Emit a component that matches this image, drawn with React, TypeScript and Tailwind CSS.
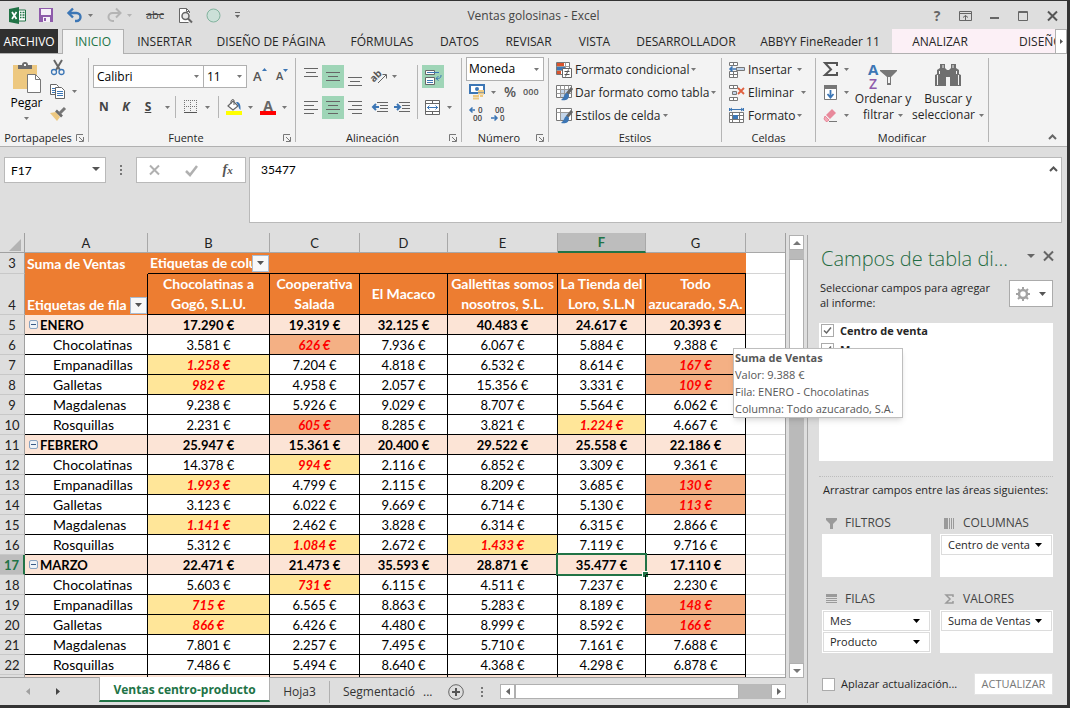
import { useState } from 'react';
import type { ReactNode } from 'react';

type Tone = 'y' | 'o' | '';

interface Row {
  n: number;
  label: string;
  month?: boolean;
  values: string[];
  // one letter per value: y = yellow, o = orange, - = plain
  marks: string;
}

const columns = ['A', 'B', 'C', 'D', 'E', 'F', 'G'];

const headers = [
  ['Chocolatinas a', 'Gogó, S.L.U.'],
  ['Cooperativa', 'Salada'],
  ['El Macaco'],
  ['Galletitas somos', 'nosotros, S.L.'],
  ['La Tienda del', 'Loro, S.L.N'],
  ['Todo', 'azucarado, S.A.'],
];

const rows: Row[] = [
  { n: 5, label: 'ENERO', month: true, values: ['17.290', '19.319', '32.125', '40.483', '24.617', '20.393'], marks: '------' },
  { n: 6, label: 'Chocolatinas', values: ['3.581', '626', '7.936', '6.067', '5.884', '9.388'], marks: '-o----' },
  { n: 7, label: 'Empanadillas', values: ['1.258', '7.204', '4.818', '6.532', '8.614', '167'], marks: 'y----o' },
  { n: 8, label: 'Galletas', values: ['982', '4.958', '2.057', '15.356', '3.331', '109'], marks: 'y----o' },
  { n: 9, label: 'Magdalenas', values: ['9.238', '5.926', '9.029', '8.707', '5.564', '6.062'], marks: '------' },
  { n: 10, label: 'Rosquillas', values: ['2.231', '605', '8.285', '3.821', '1.224', '4.667'], marks: '-o--y-' },
  { n: 11, label: 'FEBRERO', month: true, values: ['25.947', '15.361', '20.400', '29.522', '25.558', '22.186'], marks: '------' },
  { n: 12, label: 'Chocolatinas', values: ['14.378', '994', '2.116', '6.852', '3.309', '9.361'], marks: '-y----' },
  { n: 13, label: 'Empanadillas', values: ['1.993', '4.799', '2.115', '8.209', '3.685', '130'], marks: 'y----o' },
  { n: 14, label: 'Galletas', values: ['3.123', '6.022', '9.669', '6.714', '5.130', '113'], marks: '-----o' },
  { n: 15, label: 'Magdalenas', values: ['1.141', '2.462', '3.828', '6.314', '6.315', '2.866'], marks: 'y-----' },
  { n: 16, label: 'Rosquillas', values: ['5.312', '1.084', '2.672', '1.433', '7.119', '9.716'], marks: '-y-y--' },
  { n: 17, label: 'MARZO', month: true, values: ['22.471', '21.473', '35.593', '28.871', '35.477', '17.110'], marks: '------' },
  { n: 18, label: 'Chocolatinas', values: ['5.603', '731', '6.115', '4.511', '7.237', '2.230'], marks: '-y----' },
  { n: 19, label: 'Empanadillas', values: ['715', '6.565', '8.863', '5.283', '8.189', '148'], marks: 'y----o' },
  { n: 20, label: 'Galletas', values: ['866', '6.426', '4.480', '8.999', '8.592', '166'], marks: 'y----o' },
  { n: 21, label: 'Magdalenas', values: ['7.801', '2.257', '7.495', '5.710', '7.161', '7.688'], marks: '------' },
  { n: 22, label: 'Rosquillas', values: ['7.486', '5.494', '8.640', '4.368', '4.298', '6.878'], marks: '------' },
];

const tabs = [
  { name: 'INSERTAR', width: 'w-[81px]' },
  { name: 'DISEÑO DE PÁGINA', width: 'w-[132px]' },
  { name: 'FÓRMULAS', width: 'w-[90px]' },
  { name: 'DATOS', width: 'w-[65px]' },
  { name: 'REVISAR', width: 'w-[73px]' },
  { name: 'VISTA', width: 'w-[59px]' },
  { name: 'DESARROLLADOR', width: 'w-[124px]' },
  { name: 'ABBYY FineReader 11', width: 'w-[144px]' },
];

const Svg = ({ w, h, children }: { w: number; h: number; children: ReactNode }) => (
  <svg width={w} height={h} viewBox={`0 0 ${w} ${h}`} fill="none" className="shrink-0 overflow-visible" aria-hidden="true">
    {children}
  </svg>
);

const Caret = ({ color = '#777' }: { color?: string }) => (
  <Svg w={5} h={3}>
    <path d="M0 0h5L2.5 3z" fill={color} />
  </Svg>
);

const BigCaret = ({ color = '#555' }: { color?: string }) => (
  <Svg w={8} h={4}>
    <path d="M0 0h8L4 4z" fill={color} />
  </Svg>
);

const Lines = ({ rows: list }: { rows: [number, number][] }) => (
  <Svg w={14} h={13}>
    {list.map(([x, len], i) => (
      <path key={i} d={`M${x} ${i * 4 + 0.5}h${len}`} stroke="#666" />
    ))}
  </Svg>
);

const Launcher = () => (
  <button aria-label="Más opciones" className="mr-1">
    <Svg w={8} h={8}>
      <path d="M.5 7V.5H7M3 3l4 4M7.5 3v4.5H3" stroke="#777" />
    </Svg>
  </button>
);

const Group = ({ title, width, launcher, children }: { title: string; width: string; launcher?: boolean; children: ReactNode }) => (
  <div className={`${width} shrink-0 flex pt-1`}>
    <div className="flex-1 min-w-0 flex flex-col">
      <div className="flex-1 min-h-0">{children}</div>
      <div className="h-4 flex items-center text-[#262626]">
        <span className="flex-1 text-center">{title}</span>
        {launcher && <Launcher />}
      </div>
    </div>
    <div className="w-px mb-1 bg-[#b5b5b5]" />
  </div>
);

const Sep = () => <div className="w-px h-[22px] bg-[#b5b5b5]" />;

const CloseIcon = ({ color }: { color: string }) => (
  <Svg w={11} h={10}>
    <path d="M1 .5l9 9M10 .5l-9 9" stroke={color} strokeWidth="2" />
  </Svg>
);

const TitleBar = () => (
  <header className="h-7 shrink-0 flex items-center pt-px text-xs text-[#444]">
    <div className="flex-1 flex items-center gap-[13px] pl-[9px]">
      <Svg w={17} h={17}>
        <path d="M9 3h7.5v11H9z" fill="#fff" stroke="#217346" />
        <path d="M11 5.5h1.5M11 8h1.5M11 10.500h1.500M13.500 5.500h2M13.500 8h2M13.500 10.500h2" stroke="#217346" strokeWidth="1.500" />
        <path d="M0 2l10-2v17L0 15z" fill="#217346" />
        <path d="M3 5l4.500 7M7.500 5L3 12" stroke="#fff" strokeWidth="1.700" />
      </Svg>
      <button aria-label="Guardar">
        <Svg w={15} h={15}>
          <path d="M0 0h14v14H0z" fill="#8e5bab" />
          <path d="M2 1h10v6H2zM4 9h7v5H4z" fill="#f6f0f9" />
          <path d="M5 10h2v3H5z" fill="#8e5bab" />
        </Svg>
      </button>
      <button aria-label="Deshacer" className="flex items-center gap-[5px]">
        <Svg w={16} h={15}>
          <path d="M2 5h7.500a4 4 0 010 8H8" stroke="#3c76b5" strokeWidth="2.400" />
          <path d="M6 .5L1.500 5 6 9.500" stroke="#3c76b5" strokeWidth="2.400" />
        </Svg>
        <Caret />
      </button>
      <button aria-label="Rehacer" className="flex items-center gap-[5px]">
        <Svg w={16} h={15}>
          <path d="M14 5H6.500a4 4 0 000 8H8" stroke="#b4b4b4" strokeWidth="2" />
          <path d="M10 .5L14.500 5 10 9.500" stroke="#b4b4b4" strokeWidth="2" />
        </Svg>
        <Caret color="#b4b4b4" />
      </button>
      <button aria-label="Tachado" className="w-5 text-[11px] line-through">abc</button>
      <button aria-label="Vista previa">
        <Svg w={15} h={16}>
          <path d="M10.500 14.500h-9V.5h7l3 3V5" fill="#fff" stroke="#666" />
          <path d="M8.500.5v3h3" stroke="#666" />
          <circle cx="7.500" cy="8" r="3.500" fill="#e8e8e8" stroke="#666" strokeWidth="1.500" />
          <path d="M10 10.500l4 4" stroke="#666" strokeWidth="2" />
        </Svg>
      </button>
      <button aria-label="Grabar">
        <Svg w={15} h={15}>
          <circle cx="7.500" cy="7.500" r="6.500" fill="#cbe0d8" stroke="#82b39e" />
        </Svg>
      </button>
      <button aria-label="Personalizar barra">
        <Svg w={7} h={7}>
          <path d="M1 .5h5" stroke="#666" />
          <path d="M1 3h5L3.500 6z" fill="#666" />
        </Svg>
      </button>
    </div>
    <h1>Ventas golosinas - Excel</h1>
    <div className="flex-1 flex items-center justify-end gap-[18px] pr-[9px] text-[#666]">
      <button aria-label="Ayuda" className="w-2 text-sm font-bold">?</button>
      <button aria-label="Opciones de la cinta">
        <Svg w={13} h={10}>
          <path d="M.5.5h12v9H.5zM.5 2.500h12M6.500 9V4.500M4 6.500L6.500 4.500 9 6.500" stroke="#666" />
        </Svg>
      </button>
      <button aria-label="Minimizar">
        <Svg w={10} h={10}>
          <path d="M0 7h9" stroke="#666" strokeWidth="2" />
        </Svg>
      </button>
      <button aria-label="Maximizar">
        <Svg w={11} h={10}>
          <path d="M.5.5h9v9h-9zM.5 1.500h9" stroke="#666" />
        </Svg>
      </button>
      <button aria-label="Cerrar"><CloseIcon color="#555" /></button>
    </div>
  </header>
);

const TabBar = () => (
  <nav className="h-[25px] shrink-0 flex text-xs text-[#262626] border-b border-[#b0b0b0]">
    <button className="w-[58px] shrink-0 pt-px bg-[#303030] text-white whitespace-nowrap">ARCHIVO</button>
    <button className="w-[62px] shrink-0 ml-1 -mb-px border border-b-0 border-[#b0b0b0] bg-[#f3f3f3] text-[#217346]">INICIO</button>
    {tabs.map((t) => (
      <button key={t.name} className={`${t.width} shrink-0 pt-px whitespace-nowrap`}>{t.name}</button>
    ))}
    <div className="flex-1 min-w-0 flex overflow-hidden bg-[#fcf0f6]">
      <button className="w-24 shrink-0 pt-px">ANALIZAR</button>
      <button className="w-[75px] shrink-0 pt-px pl-[31px] text-left">DISEÑO</button>
    </div>
    <button aria-label="Más fichas" className="w-3 shrink-0 flex items-center justify-center border border-b-0 border-[#b0b0b0] bg-white">
      <Svg w={3} h={5}><path d="M0 0l3 2.500L0 5z" fill="#555" /></Svg>
    </button>
  </nav>
);

const Clipboard = () => (
  <Group title="Portapapeles" width="w-[89px]" launcher>
    <div className="flex">
      <button className="w-[52px] pl-px flex flex-col items-center pt-1">
        <Svg w={28} h={31}>
          <path d="M0 3h24v24H0z" fill="#edc880" />
          <path d="M5 7V3h4a3 3 0 016 0h4v4z" fill="#6b6b6b" />
          <path d="M11 2h2v2h-2z" fill="#f3f3f3" />
          <path d="M14.500 12.500h8l5 5v13h-13z" fill="#fff" stroke="#777" />
          <path d="M22.500 12.500v5h5" stroke="#777" />
        </Svg>
        <span className="text-xs leading-[20px]">Pegar</span>
        <span className="mt-1"><Caret /></span>
      </button>
      <div className="flex flex-col gap-2 pt-[2px] -ml-[2px]">
        <button aria-label="Cortar">
          <Svg w={16} h={16}>
            <path d="M4 0l6 10M12 0L6 10" stroke="#666" strokeWidth="2" />
            <circle cx="4" cy="12" r="2.500" stroke="#3c76b5" strokeWidth="1.300" />
            <circle cx="11.500" cy="12" r="2.500" stroke="#3c76b5" strokeWidth="1.300" />
          </Svg>
        </button>
        <button aria-label="Copiar" className="flex items-center gap-[6px]">
          <Svg w={16} h={15}>
            <path d="M.5.5h6l2 2v8h-8z" fill="#fff" stroke="#666" />
            <path d="M2 4.500h4M2 6.500h4M2 8.500h3" stroke="#3c76b5" />
            <path d="M5.500 3.500h6l3 3v8h-9z" fill="#fff" stroke="#666" />
            <path d="M7 7.500h6M7 9.500h6M7 11.500h6" stroke="#3c76b5" />
          </Svg>
          <Caret />
        </button>
        <button aria-label="Copiar formato">
          <Svg w={16} h={15}>
            <path d="M0 6l6-1 4 5-3 4z" fill="#edc880" />
            <path d="M6 3.500l6 6" stroke="#6b6b6b" strokeWidth="2.600" />
            <path d="M9.500 6.500L15 1" stroke="#777" strokeWidth="3" />
          </Svg>
        </button>
      </div>
    </div>
  </Group>
);

const FontGroup = () => (
  <Group title="Fuente" width="w-[207px]" launcher>
    <div className="pl-1 pt-[7px]">
      <div className="flex items-center">
        <div className="relative">
          <select aria-label="Fuente" className="appearance-none w-[111px] h-[23px] px-[3px] border border-[#b0b0b0] bg-white text-xs text-black">
            <option>Calibri</option>
          </select>
          <span className="absolute right-[5px] top-[10px] pointer-events-none"><Caret /></span>
        </div>
        <div className="relative -ml-px">
          <select aria-label="Tamaño" className="appearance-none w-11 h-[23px] px-[3px] border border-[#b0b0b0] bg-white text-xs text-black">
            <option>11</option>
          </select>
          <span className="absolute right-[5px] top-[10px] pointer-events-none"><Caret /></span>
        </div>
        <button aria-label="Aumentar fuente" className="ml-[6px] w-[19px] flex text-[#555] font-semibold text-[13px]">
          A<Svg w={5} h={5}><path d="M0 4l2.500-3L5 4z" fill="#3c76b5" /></Svg>
        </button>
        <button aria-label="Disminuir fuente" className="ml-1 w-[19px] flex text-[#555] font-semibold text-[11px]">
          A<Svg w={5} h={5}><path d="M0 1l2.500 3L5 1z" fill="#3c76b5" /></Svg>
        </button>
      </div>
      <div className="flex items-center h-[22px] mt-2 text-xs font-bold text-[#444]">
        <button className="w-[22px]">N</button>
        <button className="w-[22px] italic">K</button>
        <button className="w-[22px] underline">S</button>
        <span className="w-4 flex justify-center"><Caret /></span>
        <Sep />
        <button aria-label="Bordes" className="ml-2 flex items-center gap-[7px]">
          <Svg w={14} h={14}>
            <path d="M0 .5h13M0 6.500h13M.5 0v12M6.500 0v12M12.500 0v12" stroke="#777" strokeDasharray="1 1" />
            <path d="M0 12.500h13" stroke="#555" />
          </Svg>
          <Caret />
        </button>
        <span className="ml-2"><Sep /></span>
        <button aria-label="Color de relleno" className="ml-[7px] flex items-center gap-[6px]">
          <Svg w={16} h={16}>
            <path d="M2 7l5-5 5 5-5 4z" fill="#fff" stroke="#666" strokeWidth="1.200" />
            <path d="M5 5V2a2 2 0 013-1v5" stroke="#666" />
            <path d="M10 3c3-.5 5 2 4.500 8-1-1-2-2-2-4z" fill="#3c76b5" />
            <path d="M0 12h16v4H0z" fill="#ff0" />
          </Svg>
          <Caret />
        </button>
        <button aria-label="Color de fuente" className="ml-[7px] flex items-center gap-[6px]">
          <span className="w-4 h-4 flex items-start justify-center border-b-4 border-[#ff0000] text-sm leading-[13px] font-bold text-[#666]">A</span>
          <Caret />
        </button>
      </div>
    </div>
  </Group>
);

const IndentIcon = ({ right }: { right?: boolean }) => (
  <Svg w={16} h={13}>
    <path d="M5 1.500h11M8 4.500h8M8 7.500h8M5 10.500h11" stroke="#666" />
    {right ? (
      <path d="M0 6h5M3 3l3 3-3 3" stroke="#3c76b5" strokeWidth="2" />
    ) : (
      <path d="M2 6h5M4 3L1 6l3 3" stroke="#3c76b5" strokeWidth="2" />
    )}
  </Svg>
);

const Alignment = () => (
  <Group title="Alineación" width="w-[166px]" launcher>
    <div className="flex pt-[7px] pl-1">
      <div className="w-[117px]">
        <div className="flex h-[23px]">
          <button aria-label="Arriba" className="w-[22px] flex justify-center pt-[3px]"><Lines rows={[[0, 14], [2, 10], [0, 14]]} /></button>
          <button aria-label="Medio" className="w-[22px] flex justify-center pt-[7px] bg-[#9fd5b7]"><Lines rows={[[0, 14], [2, 10], [0, 14]]} /></button>
          <button aria-label="Abajo" className="w-[22px] flex justify-center pt-3"><Lines rows={[[0, 14], [2, 10], [0, 14]]} /></button>
          <button aria-label="Orientación" className="ml-[6px] flex items-center gap-[4px]">
            <Svg w={16} h={15}>
              <g transform="rotate(-45 6 8)">
                <text x="-1" y="9" fill="#555" fontSize="10" fontWeight="bold" fontFamily="Open Sans">ab</text>
              </g>
              <path d="M6 14l8-8M10.500 5.500H14.500V9.500" stroke="#666" />
            </Svg>
            <Caret />
          </button>
        </div>
        <div className="flex items-center h-[23px] mt-2">
          <button aria-label="Izquierda" className="w-[22px] flex justify-center"><Lines rows={[[0, 14], [0, 10], [0, 14], [0, 10]]} /></button>
          <button aria-label="Centrar" className="w-[22px] h-[23px] flex justify-center items-center bg-[#9fd5b7]"><Lines rows={[[0, 14], [2, 10], [0, 14], [2, 10]]} /></button>
          <button aria-label="Derecha" className="w-[22px] flex justify-center"><Lines rows={[[0, 14], [4, 10], [0, 14], [4, 10]]} /></button>
          <button aria-label="Disminuir sangría" className="ml-[6px]"><IndentIcon /></button>
          <button aria-label="Aumentar sangría" className="ml-[6px]"><IndentIcon right /></button>
        </div>
      </div>
      <div className="w-px h-[54px] bg-[#b5b5b5]" />
      <div className="pl-1">
        <button aria-label="Ajustar texto" className="w-[22px] h-[23px] flex justify-center items-center bg-[#9fd5b7]">
          <Svg w={17} h={16}>
            <path d="M.5 1.500h9v4h-9zM.5 8.500h9v7h-9z" fill="#fff" stroke="#666" />
            <path d="M2 3.500h12M2 11.500h6M2 13.500h6M16 6c0 3-1 3.500-5 3.500M13.500 7L11 9.500l2.500 2" stroke="#3c76b5" />
          </Svg>
        </button>
        <button aria-label="Combinar" className="mt-2 h-[23px] pl-[3px] flex items-center gap-[7px]">
          <Svg w={15} h={15}>
            <path d="M.5.5h14v14H.5zM.5 3.500h14M.5 11.500h14M7.500 0v3.500M7.500 11.500V15" fill="#fff" stroke="#666" />
            <path d="M2 7.500h11M4.500 5.500l-2 2 2 2M10.500 5.500l2 2-2 2" stroke="#3c76b5" />
          </Svg>
          <Caret />
        </button>
      </div>
    </div>
  </Group>
);

const NumberGroup = () => (
  <Group title="Número" width="w-[87px]" launcher>
    <div className="pl-1">
      <div className="relative w-[78px] -mt-px">
        <select aria-label="Formato de número" className="block appearance-none w-full h-6 px-[2px] border border-[#b0b0b0] bg-white text-xs text-black">
          <option>Moneda</option>
        </select>
        <span className="absolute right-[5px] top-[11px] pointer-events-none"><Caret /></span>
      </div>
      <div className="flex items-center h-[22px] pl-[3px] text-[#555]">
        <button aria-label="Formato contabilidad" className="flex items-center gap-[6px]">
          <Svg w={16} h={16}>
            <path d="M1 1h14v8H1z" fill="#fff" stroke="#3c76b5" strokeWidth="2" />
            <circle cx="8" cy="5" r="2" fill="#3c76b5" />
            <path d="M9 7h6M9 9.500h6M4 12h6M4 14.500h6M11 12h3" stroke="#edc880" strokeWidth="2" />
          </Svg>
          <Caret />
        </button>
        <button aria-label="Porcentaje" className="ml-2 text-sm font-semibold">%</button>
        <button aria-label="Millares" className="ml-[7px] text-[9px] font-semibold">000</button>
      </div>
      <div className="flex items-center gap-[7px] h-[22px] pl-[3px]">
        <button aria-label="Aumentar decimales">
          <Svg w={15} h={15}>
            <path d="M1 3h5M3.500.5L1 3l2.500 2.500" stroke="#3c76b5" strokeWidth="1.500" />
            <text x="9" y="6" fontSize="8" fontWeight="600" fontFamily="Open Sans" fill="#444">0</text>
            <text x="4" y="14" fontSize="8" fontWeight="600" fontFamily="Open Sans" fill="#444">00</text>
          </Svg>
        </button>
        <button aria-label="Disminuir decimales">
          <Svg w={15} h={15}>
            <path d="M0 11h6M3.500 8.500L6 11l-2.500 2.500" stroke="#3c76b5" strokeWidth="1.500" />
            <text x="4" y="6" fontSize="8" fontWeight="600" fontFamily="Open Sans" fill="#444">00</text>
            <text x="9" y="14" fontSize="8" fontWeight="600" fontFamily="Open Sans" fill="#444">0</text>
          </Svg>
        </button>
      </div>
    </div>
  </Group>
);

const StyleIcon = ({ filled }: { filled?: boolean }) => (
  <Svg w={17} h={16}>
    <path d="M.5.5h15v12H.5z" fill="#fff" stroke="#777" />
    <path d="M4 4h8v8H4z" fill="#c3d5ea" />
    {filled ? (
      <path d="M.5 4.500h15M4.500.5v12" stroke="#999" />
    ) : (
      <path d="M.5 4.500h15M.5 8.500h15M4.500.5v12M8.500.5v12M12.500.5v12" stroke="#999" />
    )}
    <path d="M16 3l-5 6" stroke="#666" strokeWidth="3" />
    <path d="M11 8c-3 0-2 4-6 7 4 1 8 0 8-5z" fill="#3c76b5" />
  </Svg>
);

const Styles = () => (
  <Group title="Estilos" width="w-[173px]">
    <div className="pl-[7px] text-xs text-[#262626]">
      <button className="h-[23px] flex items-center gap-[2px] whitespace-nowrap">
        <Svg w={17} h={16}>
          <path d="M.5.5h13v12H.5z" fill="#fff" stroke="#777" />
          <path d="M1 1h7v3H1zM1 9h4v3H1z" fill="#d9532c" />
          <path d="M1 5h9v3H1z" fill="#3c76b5" />
          <path d="M.5 4.500h13M.5 8.500h13M9.500.5v12" stroke="#999" />
          <path d="M6.500 6.500h9v9h-9z" fill="#fff" stroke="#666" />
          <path d="M8.500 9.500h5M8.500 12.500h5M12.500 7.500l-3 7" stroke="#555" />
        </Svg>
        Formato condicional <Caret />
      </button>
      <button className="h-[23px] flex items-center gap-[2px] whitespace-nowrap"><StyleIcon />Dar formato como tabla <Caret /></button>
      <button className="h-[23px] flex items-center gap-[2px] whitespace-nowrap"><StyleIcon filled />Estilos de celda <Caret /></button>
    </div>
  </Group>
);

const Cells = () => (
  <Group title="Celdas" width="w-[94px]">
    <div className="pl-[7px] text-xs text-[#262626]">
      <button className="h-[23px] flex items-center gap-[3px]">
        <Svg w={16} h={16}>
          <path d="M.5.5h8v3h-8zM4.500.5v3M.5 9.500h8v6h-8zM4.500 9.500v6M.5 12.500h8" fill="#fff" stroke="#777" />
          <path d="M7.500 5.500h8v3h-8z" fill="#c3d5ea" stroke="#777" />
          <path d="M1 7h6M3.500 4.500L1 7l2.500 2.500" stroke="#3c76b5" strokeWidth="1.600" />
        </Svg>
        <span className="w-[46px] text-left">Insertar</span><Caret />
      </button>
      <button className="h-[23px] flex items-center gap-[3px]">
        <Svg w={16} h={16}>
          <path d="M.5.5h8v3h-8zM4.500.5v3M.5 12.500h8v3h-8zM4.500 12.500v3" fill="#fff" stroke="#777" />
          <path d="M3.500 6.500h4v3h-4z" fill="#c3d5ea" stroke="#777" />
          <path d="M9 3l6 6M15 3L9 9" stroke="#e0603f" strokeWidth="1.800" />
        </Svg>
        <span className="w-[50px] text-left">Eliminar</span><Caret />
      </button>
      <button className="h-[23px] flex items-center gap-[3px]">
        <Svg w={16} h={16}>
          <path d="M1 1.500h13M3 0L1 1.500 3 3M12 0l2 1.500L12 3M.5 0v3M14.500 0v3" stroke="#3c76b5" />
          <path d="M.5 4.500h14v10H.5zM.5 7.500h14M.5 11.500h14M3.500 4.500v10M10.500 4.500v10" fill="#fff" stroke="#777" />
          <path d="M4 7h5v4H4z" fill="#3c76b5" />
        </Svg>
        <span className="w-[46px] text-left">Formato</span><Caret />
      </button>
    </div>
  </Group>
);

const Editing = () => (
  <Group title="Modificar" width="w-[173px]">
    <div className="flex pl-[7px] text-xs text-[#262626]">
      <div className="w-[27px]">
        <button aria-label="Suma" className="h-[23px] flex items-center gap-[6px]">
          <Svg w={15} h={15}>
            <path d="M14 4V1H2l6 6.500L2 13h12v-3" stroke="#555" strokeWidth="2" />
          </Svg>
          <Caret />
        </button>
        <button aria-label="Rellenar" className="h-[23px] flex items-center gap-[6px]">
          <Svg w={15} h={15}>
            <path d="M1.500.5h12v14h-12z" fill="#fff" stroke="#777" />
            <path d="M1 0h13v4H1z" fill="#777" />
            <path d="M7.500 5v7M4.500 9l3 3.500 3-3.500" stroke="#3c76b5" strokeWidth="1.800" />
          </Svg>
          <Caret />
        </button>
        <button aria-label="Borrar" className="h-[23px] flex items-center gap-[6px]">
          <Svg w={15} h={14}>
            <path d="M3 6l6-6 4 4-6 6z" fill="#e8899b" />
            <path d="M2 7l4 4-2 1.500H3L1 10z" fill="#f3a9b6" stroke="#e8899b" />
            <path d="M6 12.500h8" stroke="#777" />
          </Svg>
          <Caret />
        </button>
      </div>
      <button className="w-[66px] flex flex-col items-center pt-[5px]">
        <Svg w={30} h={28}>
          <text x="0" y="12" fontSize="15" fontWeight="bold" fontFamily="Open Sans" fill="#3c76b5">A</text>
          <text x="1" y="26" fontSize="14" fontWeight="600" fontFamily="Open Sans" fill="#8e5bab">Z</text>
          <path d="M12 7h17v1l-6 6v8h-4v-8l-7-6z" fill="#777" />
          <path d="M20 14h2v6h-2z" fill="#f3f3f3" />
        </Svg>
        <span className="leading-4">Ordenar y</span>
        <span className="leading-4 flex items-center gap-1">filtrar <Caret /></span>
      </button>
      <button className="w-16 flex flex-col items-center pt-[5px] whitespace-nowrap">
        <Svg w={26} h={28}>
          <path d="M0 23V12l2-1V7l3-2V1h5v4l2 2h2l2-2V1h5v4l3 2v4l2 1v11H15v-9h-4v9z" fill="#6f6f6f" />
          <path d="M2.500 12v10M23.500 12v10M4.500 8v3M21.500 8v3M8 2v3M18 2v3" stroke="#f3f3f3" />
        </Svg>
        <span className="leading-4">Buscar y</span>
        <span className="leading-4 flex items-center gap-1">seleccionar <Caret /></span>
      </button>
    </div>
  </Group>
);

const Ribbon = () => (
  <div className="h-[93px] shrink-0 flex bg-[#f3f3f3] border-b border-[#b0b0b0] text-[11px]">
    <Clipboard />
    <FontGroup />
    <Alignment />
    <NumberGroup />
    <Styles />
    <Cells />
    <Editing />
    <div className="flex-1 flex items-end justify-end pr-[10px] pb-[6px]">
      <button aria-label="Contraer la cinta">
        <Svg w={9} h={6}><path d="M1 5l3.500-3.500L8 5" stroke="#666" strokeWidth="2" /></Svg>
      </button>
    </div>
  </div>
);

const FormulaBar = () => {
  const [cell, setCell] = useState('F17');
  const [formula, setFormula] = useState('35477');

  return (
    <div className="shrink-0 flex items-start pl-1 pr-[5px] pt-[10px] pb-[10px]">
      <div className="relative">
        <input
          aria-label="Cuadro de nombres"
          value={cell}
          onChange={(e) => setCell(e.target.value)}
          className="block w-[102px] h-[26px] px-[6px] border border-[#b9b9b9] bg-white font-[Lato,sans-serif] text-xs text-black"
        />
        <span className="absolute right-[6px] top-[10px] flex"><BigCaret /></span>
      </div>
      <div className="w-[30px] h-[26px] flex flex-col items-center justify-center gap-[2px]">
        <i className="size-[2px] bg-[#777]" />
        <i className="size-[2px] bg-[#777]" />
        <i className="size-[2px] bg-[#777]" />
      </div>
      <div className="w-[110px] h-[26px] flex items-center justify-around border border-[#b9b9b9] bg-white">
        <button aria-label="Cancelar"><CloseIcon color="#b0b0b0" /></button>
        <button aria-label="Introducir">
          <Svg w={13} h={11}><path d="M1 6l4 4 7-9" stroke="#b0b0b0" strokeWidth="2.500" /></Svg>
        </button>
        <button aria-label="Insertar función" className="font-['Liberation_Serif',serif] italic font-bold text-sm text-[#555]">
          f<span className="text-[11px]">x</span>
        </button>
      </div>
      <div className="relative flex-1 ml-[3px]">
        <textarea
          aria-label="Barra de fórmulas"
          value={formula}
          onChange={(e) => setFormula(e.target.value)}
          className="block w-full h-[66px] px-[11px] py-1 border border-[#b9b9b9] bg-white resize-none font-[Lato,sans-serif] text-xs text-black"
        />
        <button aria-label="Contraer barra" className="absolute right-1 top-[9px]">
          <Svg w={9} h={6}><path d="M1 5l3.500-3.500L8 5" stroke="#555" strokeWidth="2" /></Svg>
        </button>
      </div>
    </div>
  );
};

const FilterButton = () => (
  <button aria-label="Filtrar" className="size-[17px] shrink-0 flex items-center justify-center border border-[#a9bcd3] bg-[#f8f8f8]">
    <Svg w={7} h={4}><path d="M0 0h7L3.500 4z" fill="#555" /></Svg>
  </button>
);

const toneOf = (mark: string): Tone => (mark === 'y' || mark === 'o' ? mark : '');

const toneClass: Record<Tone, string> = {
  y: 'bg-[#ffe699] text-[#ff0000] font-bold italic',
  o: 'bg-[#f4b084] text-[#ff0000] font-bold italic',
  '': '',
};

const rowHead = 'border-r border-b border-r-[#a0a0a0] border-b-[#c8c8c8] bg-[#dedede] font-normal text-[#222] text-[13px]';

const Sheet = () => (
  <div className="flex-1 min-w-0 min-h-0 overflow-hidden bg-white border-r border-b border-[#a0a0a0]">
    <table className="table-fixed w-[786px] border-separate border-spacing-0 font-[Lato,sans-serif] text-[13px] text-black leading-[18px] [&_td]:p-0 [&_th]:p-0">
      <colgroup>
        <col className="w-[25px]" />
        <col className="w-[123px]" />
        <col className="w-[122px]" />
        <col className="w-[90px]" />
        <col className="w-[88px]" />
        <col className="w-[110px]" />
        <col className="w-[88px]" />
        <col className="w-[100px]" />
        <col className="w-[40px]" />
      </colgroup>
      <thead>
        <tr className="h-5 bg-[#dedede] text-[#222]">
          <th className="border-r border-b border-[#a0a0a0]">
            <span className="flex justify-end pr-[3px] pt-1"><Svg w={12} h={12}><path d="M12 0v12H0z" fill="#b3b3b3" /></Svg></span>
          </th>
          {columns.map((c) => (
            <th
              key={c}
              className={c === 'F' ? 'border-r border-r-[#a8a8a8] border-b-2 border-b-[#217346] bg-[#bdbdbd] text-[#217346] font-bold' : 'border-r border-b border-[#a8a8a8] font-normal'}
            >
              {c}
            </th>
          ))}
          <th className="border-b border-[#a8a8a8]" />
        </tr>
      </thead>
      <tbody>
        <tr className="h-[21px] bg-[#ed7d31] text-white text-sm leading-[18px]">
          <th className={rowHead}>3</th>
          <td className="font-bold"><span className="block pl-[2px] whitespace-nowrap">Suma de Ventas</span></td>
          <td className="border-b border-black font-bold">
            <div className="flex items-center justify-between pl-[2px] pr-px">
              <span className="w-[102px] overflow-hidden whitespace-nowrap">Etiquetas de columna</span>
              <FilterButton />
            </div>
          </td>
          <td colSpan={5} className="border-b border-black" />
          <td className="bg-white border-b border-[#d4d4d4]" />
        </tr>
        <tr className="h-[41px] bg-[#ed7d31] text-white text-sm leading-[18px]">
          <th className={`${rowHead} align-bottom`}>4</th>
          <td className="border-r border-black align-bottom font-bold">
            <div className="flex items-center justify-between pl-[2px] pb-px whitespace-nowrap">
              Etiquetas de fila <FilterButton />
            </div>
          </td>
          {headers.map((lines) => (
            <th key={lines[0]} className="border-r border-b border-black font-bold leading-[20px] whitespace-nowrap">
              {lines.map((line) => <span key={line} className="block">{line}</span>)}
            </th>
          ))}
          <td className="bg-white border-b border-[#d4d4d4]" />
        </tr>
        {rows.map((row) => (
          <tr key={row.n} className={row.month ? 'h-5 bg-[#fce4d6] font-bold' : 'h-5 bg-white'}>
            <th
              className={row.n === 17 ? 'border-r-2 border-b border-r-[#217346] border-b-[#c8c8c8] bg-[#bdbdbd] text-[#217346] font-bold' : rowHead}
            >
              {row.n}
            </th>
            <td className="border-r border-b border-black">
              {row.month ? (
                <span className="flex items-center gap-[2px] pl-1">
                  <button aria-label="Contraer" className="size-[9px] flex items-center justify-center rounded-xs border border-[#8aa3c0] bg-[#eef2f7]">
                    <i className="w-[5px] h-px bg-[#3a5a85]" />
                  </button>
                  {row.label}
                </span>
              ) : (
                <span className="block pl-7 text-sm leading-[18px]">{row.label}</span>
              )}
            </td>
            {row.values.map((v, i) => (
              <td key={i} className={`relative border-r border-b border-black text-center whitespace-nowrap ${toneClass[toneOf(row.marks[i])]}`}>
                {v} €
                {row.n === 17 && i === 4 && (
                  <span className="absolute -inset-[2px] border-2 border-[#217346] pointer-events-none">
                    <i className="absolute -right-[3px] -bottom-[3px] size-[6px] border-t border-l border-white bg-[#217346]" />
                  </span>
                )}
              </td>
            ))}
            <td className="bg-white border-b border-[#d4d4d4]" />
          </tr>
        ))}
        <tr className="h-5 bg-[#fce4d6]">
          <th className={rowHead} />
          {columns.map((c) => <td key={c} className="border-r border-black" />)}
          <td className="bg-white" />
        </tr>
      </tbody>
    </table>
  </div>
);

const SheetTabs = () => (
  <div className="h-[27px] shrink-0 flex items-center text-xs text-[#333]">
    <button aria-label="Hoja anterior" className="w-[56px] flex justify-center">
      <Svg w={4} h={7}><path d="M4 0v7L0 3.500z" fill="#a0a0a0" /></Svg>
    </button>
    <button aria-label="Hoja siguiente" className="w-[43px] flex">
      <Svg w={4} h={7}><path d="M0 0v7l4-3.500z" fill="#444" /></Svg>
    </button>
    <button className="w-[171px] h-[25px] pt-[2px] self-start -mt-px shrink-0 border-x border-x-[#b0b0b0] border-b-2 border-b-[#217346] bg-white text-[#217346] font-bold whitespace-nowrap">
      Ventas centro-producto
    </button>
    <button className="w-[60px] h-[22px] border-r border-[#b0b0b0]">Hoja3</button>
    <button className="w-[72px] ml-[13px] overflow-hidden text-left">Segmentación</button>
    <button aria-label="Más hojas" className="ml-2">...</button>
    <button aria-label="Hoja nueva" className="ml-4">
      <Svg w={16} h={16}>
        <circle cx="8" cy="8" r="7.300" stroke="#666" />
        <path d="M4 8h8M8 4v8" stroke="#555" strokeWidth="2" />
      </Svg>
    </button>
    <div className="w-9 flex flex-col items-center gap-[2px]">
      <i className="size-[2px] bg-[#777]" />
      <i className="size-[2px] bg-[#777]" />
      <i className="size-[2px] bg-[#777]" />
    </div>
    <div className="flex-1 h-[15px] flex bg-[#bababa]">
      <button aria-label="Desplazar a la izquierda" className="w-[15px] flex items-center justify-center border border-[#b0b0b0] bg-white">
        <Svg w={4} h={7}><path d="M4 0v7L0 3.500z" fill="#666" /></Svg>
      </button>
      <div className="flex-1 mr-8 border border-[#b0b0b0] bg-white" />
      <button aria-label="Desplazar a la derecha" className="w-[15px] flex items-center justify-center border border-[#b0b0b0] bg-white">
        <Svg w={4} h={7}><path d="M0 0v7l4-3.500z" fill="#666" /></Svg>
      </button>
    </div>
  </div>
);

const VerticalScroll = () => (
  <div className="w-[15px] ml-[3px] mr-[3px] mt-[2px] mb-[27px] shrink-0 flex flex-col bg-[#bababa]">
    <button aria-label="Desplazar arriba" className="h-[15px] flex items-center justify-center border border-[#b0b0b0] bg-white">
      <Svg w={8} h={4}><path d="M0 4h8L4 0z" fill="#777" /></Svg>
    </button>
    <div className="h-[36%] mt-[9px] border border-[#b0b0b0] bg-white" />
    <button aria-label="Desplazar abajo" className="h-[15px] mt-auto flex items-center justify-center border border-[#b0b0b0] bg-white">
      <BigCaret color="#777" />
    </button>
  </div>
);

const Field = ({ children }: { children: ReactNode }) => (
  <button className="h-5 w-full flex items-center justify-between pl-[6px] pr-[9px] border border-[#dcdcdc] whitespace-nowrap">
    {children}
    <Svg w={7} h={4}><path d="M0 0h7L3.500 4z" fill="#000" /></Svg>
  </button>
);

const Area = ({ title, icon, children }: { title: string; icon: ReactNode; children?: ReactNode }) => (
  <section>
    <h3 className="h-6 flex items-center gap-2 pl-1 pt-[2px] text-xs text-[#444]">{icon}{title}</h3>
    <div className="h-[43px] flex flex-col gap-px p-px bg-white">{children}</div>
  </section>
);

const FieldCheck = ({ label }: { label: string }) => (
  <label className="h-[19px] flex items-start gap-[6px] pt-px leading-[13px] font-bold">
    <span className="relative flex">
      <input type="checkbox" defaultChecked className="peer appearance-none size-[13px] border border-[#ababab] bg-white" />
      <span className="absolute inset-[2px] hidden peer-checked:block pointer-events-none">
        <Svg w={9} h={9}><path d="M1 4.500L3.500 7 8 1.500" stroke="#666" strokeWidth="1.500" /></Svg>
      </span>
    </span>
    {label}
  </label>
);

const FieldsPanel = () => (
  <aside className="w-[260px] shrink-0 mt-[2px] mb-[2px] pl-[11px] pr-[14px] border-l border-[#a8a8a8] text-[11px] text-[#262626]">
    <div className="flex items-start justify-between pt-[9px]">
      <h2 className="text-xl leading-[30px] pl-[2px] font-light text-[#1e6b41] whitespace-nowrap">Campos de tabla di...</h2>
      <div className="flex items-center gap-2 pt-[7px] -mr-px">
        <button aria-label="Opciones del panel"><BigCaret color="#666" /></button>
        <button aria-label="Cerrar panel"><CloseIcon color="#666" /></button>
      </div>
    </div>
    <div className="flex justify-between pt-[6px] pl-px">
      <p className="leading-[15px] w-[180px]">Seleccionar campos para agregar<br />al informe:</p>
      <button aria-label="Herramientas" className="w-11 h-[27px] flex items-center justify-center gap-[9px] border border-[#ababab] bg-white">
        <Svg w={14} h={14}>
          <circle cx="7" cy="7" r="4" stroke="#a3a3a3" strokeWidth="2.500" />
          <path d="M7 0v3M7 11v3M0 7h3M11 7h3M2 2l2 2M10 10l2 2M12 2l-2 2M4 10l-2 2" stroke="#a3a3a3" strokeWidth="2" />
        </Svg>
        <Svg w={7} h={4}><path d="M0 0h7L3.500 4z" fill="#555" /></Svg>
      </button>
    </div>
    <div className="h-[138px] mt-[13px] px-[2px] bg-white">
      <FieldCheck label="Centro de venta" />
      <FieldCheck label="Mes" />
      <FieldCheck label="Producto" />
      <FieldCheck label="Ventas" />
      <a href="#" className="block mt-1 leading-5">MÁS TABLAS...</a>
    </div>
    <div className="mt-[15px] border-t border-dotted border-[#bdbdbd]" />
    <p className="pl-1 pt-1 leading-[18px] whitespace-nowrap">Arrastrar campos entre las áreas siguientes:</p>
    <div className="grid grid-cols-[109px_1fr] gap-x-[9px] gap-y-[9px] mt-[11px] ml-[3px]">
      <Area title="FILTROS" icon={<Svg w={11} h={11}><path d="M0 0h11v2L7 6v5H4V6L0 2z" fill="#9a9a9a" /></Svg>} />
      <Area title="COLUMNAS" icon={<Svg w={11} h={11}><path d="M0 0h4v11H0zM5 0h1v11H5zM7 0h1v11H7zM9 0h1v11H9z" fill="#9a9a9a" /></Svg>}>
        <Field>Centro de venta</Field>
      </Area>
      <Area title="FILAS" icon={<Svg w={11} h={11}><path d="M0 0h11v3H0zM0 4h11v1H0zM0 6h11v1H0zM0 8h11v1H0z" fill="#9a9a9a" /></Svg>}>
        <Field>Mes</Field>
        <Field>Producto</Field>
      </Area>
      <Area title="VALORES" icon={<Svg w={11} h={11}><path d="M9 3V1H2l4 4-4 4h7V7" stroke="#9a9a9a" strokeWidth="1.500" /></Svg>}>
        <Field>Suma de Ventas</Field>
      </Area>
    </div>
    <div className="flex items-center justify-between mt-5 ml-[3px]">
      <label className="flex items-center gap-[6px] whitespace-nowrap">
        <input type="checkbox" className="appearance-none size-[13px] border border-[#ababab] bg-white" />
        Aplazar actualización...
      </label>
      <button className="w-[79px] h-[22px] border border-[#e4e4e4] bg-white text-[#777]">ACTUALIZAR</button>
    </div>
  </aside>
);

const CellTooltip = () => (
  <div role="tooltip" className="absolute left-[733px] top-[115px] pl-px pr-2 border border-[#bebebe] bg-white shadow-md text-[11px] leading-[17px] text-[#575757] whitespace-nowrap">
    <p className="font-bold">Suma de Ventas</p>
    <p>Valor: 9.388 €</p>
    <p>Fila: ENERO - Chocolatinas</p>
    <p>Columna: Todo azucarado, S.A.</p>
  </div>
);

const App = () => {
  return (
    <div className="h-screen flex flex-col overflow-hidden border-t border-r-[3px] border-b-[3px] border-[#333] bg-[#dedede] font-['Open_Sans',sans-serif]">
      <TitleBar />
      <TabBar />
      <Ribbon />
      <FormulaBar />
      <main className="relative flex-1 min-h-0 flex">
        <div className="flex-1 min-w-0 flex flex-col">
          <Sheet />
          <SheetTabs />
        </div>
        <VerticalScroll />
        <FieldsPanel />
        <CellTooltip />
      </main>
    </div>
  );
};

export default App;
